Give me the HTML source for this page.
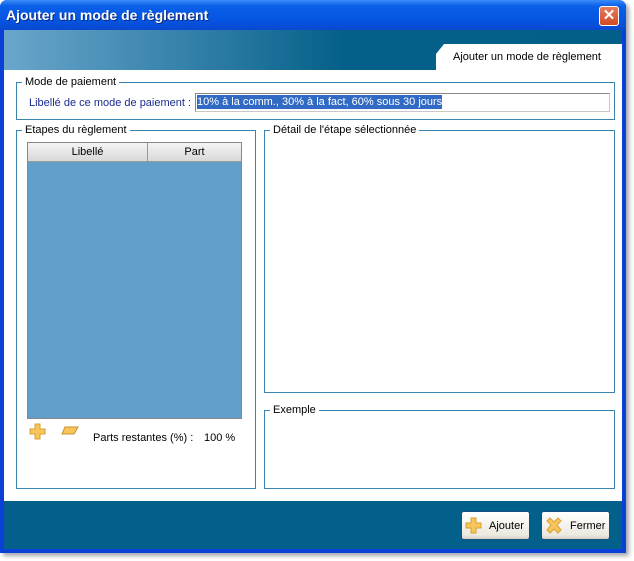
<!DOCTYPE html>
<html><head><style>
*{margin:0;padding:0;box-sizing:border-box}
body{width:634px;height:561px;background:#fff;position:relative;font-family:"Liberation Sans",sans-serif;font-size:11px;overflow:hidden}
.win{position:absolute;left:0;top:0;width:626px;height:553px;background:#0a3fd8;border-radius:7px 7px 0 0;box-shadow:3px 3px 4px rgba(0,0,0,.35)}
.title{position:absolute;left:0;top:0;width:626px;height:30px;border-radius:7px 7px 0 0;background:linear-gradient(#3a8cf8,#0a5fe8 20%,#0554e0 70%,#0a48d0);color:#fff;font-weight:bold;font-size:14px;padding:7px 0 0 6px;text-shadow:1px 1px #0a2a80}
.close{position:absolute;left:599px;top:6px;width:20px;height:20px;border:1px solid #fff;border-radius:3px;background:linear-gradient(#e87a60,#d24a20);color:#fff;font-size:15px;text-align:center;line-height:18px;font-weight:bold}
.client{position:absolute;left:4px;top:30px;width:618px;height:519px;background:#fff}
.head{position:absolute;left:0;top:0;width:618px;height:40px;background:linear-gradient(90deg,#6aa6cb,#2a7aa4 35%,#046088 55%,#026088)}
.tab{position:absolute;left:432px;top:14px;width:186px;height:26px;background:#fff;clip-path:polygon(8px 0,100% 0,100% 100%,0 100%,0 10px);font-size:11px;padding:7px 0 0 17px}
.foot{position:absolute;left:0;top:471px;width:618px;height:48px;background:#02608a}
fieldset{position:absolute;border:1px solid #3b82ae;padding:0}
legend{margin-left:5px;padding:0 3px;font-size:11px;color:#000}
.btn{position:absolute;top:481px;width:69px;height:29px;border:1px solid #1a4d80;border-radius:3px;background:linear-gradient(#fff,#ece9e0 85%,#d6d0c5);font-size:11px}
</style></head><body>
<div class="win">
<div class="title">Ajouter un mode de règlement</div>
<div class="close">✕</div>
<div class="client">
<div class="head"><div class="tab">Ajouter un mode de règlement</div></div>
<fieldset style="left:12px;top:46px;width:599px;height:44px"><legend>Mode de paiement</legend></fieldset>
<div style="position:absolute;left:25px;top:67px;color:#1a2c90">Libellé de ce mode de paiement :</div>
<div style="position:absolute;left:191px;top:63px;width:415px;height:19px;border:1px solid #c8c8c8;border-top-color:#888;border-left-color:#888;padding:2px 1px"><span style="background:#316ac5;color:#fff;padding:1px 0">10% à la comm., 30% à la fact, 60% sous 30 jours</span></div>
<fieldset style="left:12px;top:94px;width:240px;height:365px"><legend>Etapes du règlement</legend></fieldset>
<div style="position:absolute;left:23px;top:112px;width:215px;height:277px;background:#5f9fc8;border:1px solid #888">
<div style="height:19px;background:linear-gradient(#f4f4f4,#d8d8d8);border-bottom:1px solid #999;display:flex">
<div style="width:120px;border-right:1px solid #999;text-align:center;padding-top:3px">Libellé</div>
<div style="flex:1;text-align:center;padding-top:3px">Part</div></div></div>
<svg style="position:absolute;left:25px;top:393px" width="18" height="18"><path d="M6 1h5v5h5v5h-5v5h-5v-5h-5v-5h5z" fill="#f8c55a" stroke="#d8a030"/></svg>
<svg style="position:absolute;left:57px;top:396px" width="18" height="10"><path d="M4 1h13l-4 7h-12z" fill="#f8c55a" stroke="#c89030"/></svg>
<div style="position:absolute;left:89px;top:402px">Parts restantes (%) :</div>
<div style="position:absolute;left:200px;top:402px">100 %</div>
<fieldset style="left:260px;top:94px;width:351px;height:269px"><legend>Détail de l'étape sélectionnée</legend></fieldset>
<fieldset style="left:260px;top:374px;width:351px;height:85px"><legend>Exemple</legend></fieldset>
<div class="foot"></div>
<div class="btn" style="left:457px"><svg style="position:absolute;left:3px;top:5px" width="18" height="18"><path d="M6 1h5v5h5v5h-5v5h-5v-5h-5v-5h5z" fill="#f8c55a" stroke="#d8a030"/></svg><span style="position:absolute;left:27px;top:8px">Ajouter</span></div>
<div class="btn" style="left:537px"><svg style="position:absolute;left:3px;top:5px" width="18" height="18"><path d="M2 4l3-3 4 4 4-4 3 3-4 4 4 5-3 3-4-4-4 4-3-3 4-5z" fill="#f8c55a" stroke="#d8a030"/></svg><span style="position:absolute;left:28px;top:8px">Fermer</span></div>
</div></div>
</body></html>
